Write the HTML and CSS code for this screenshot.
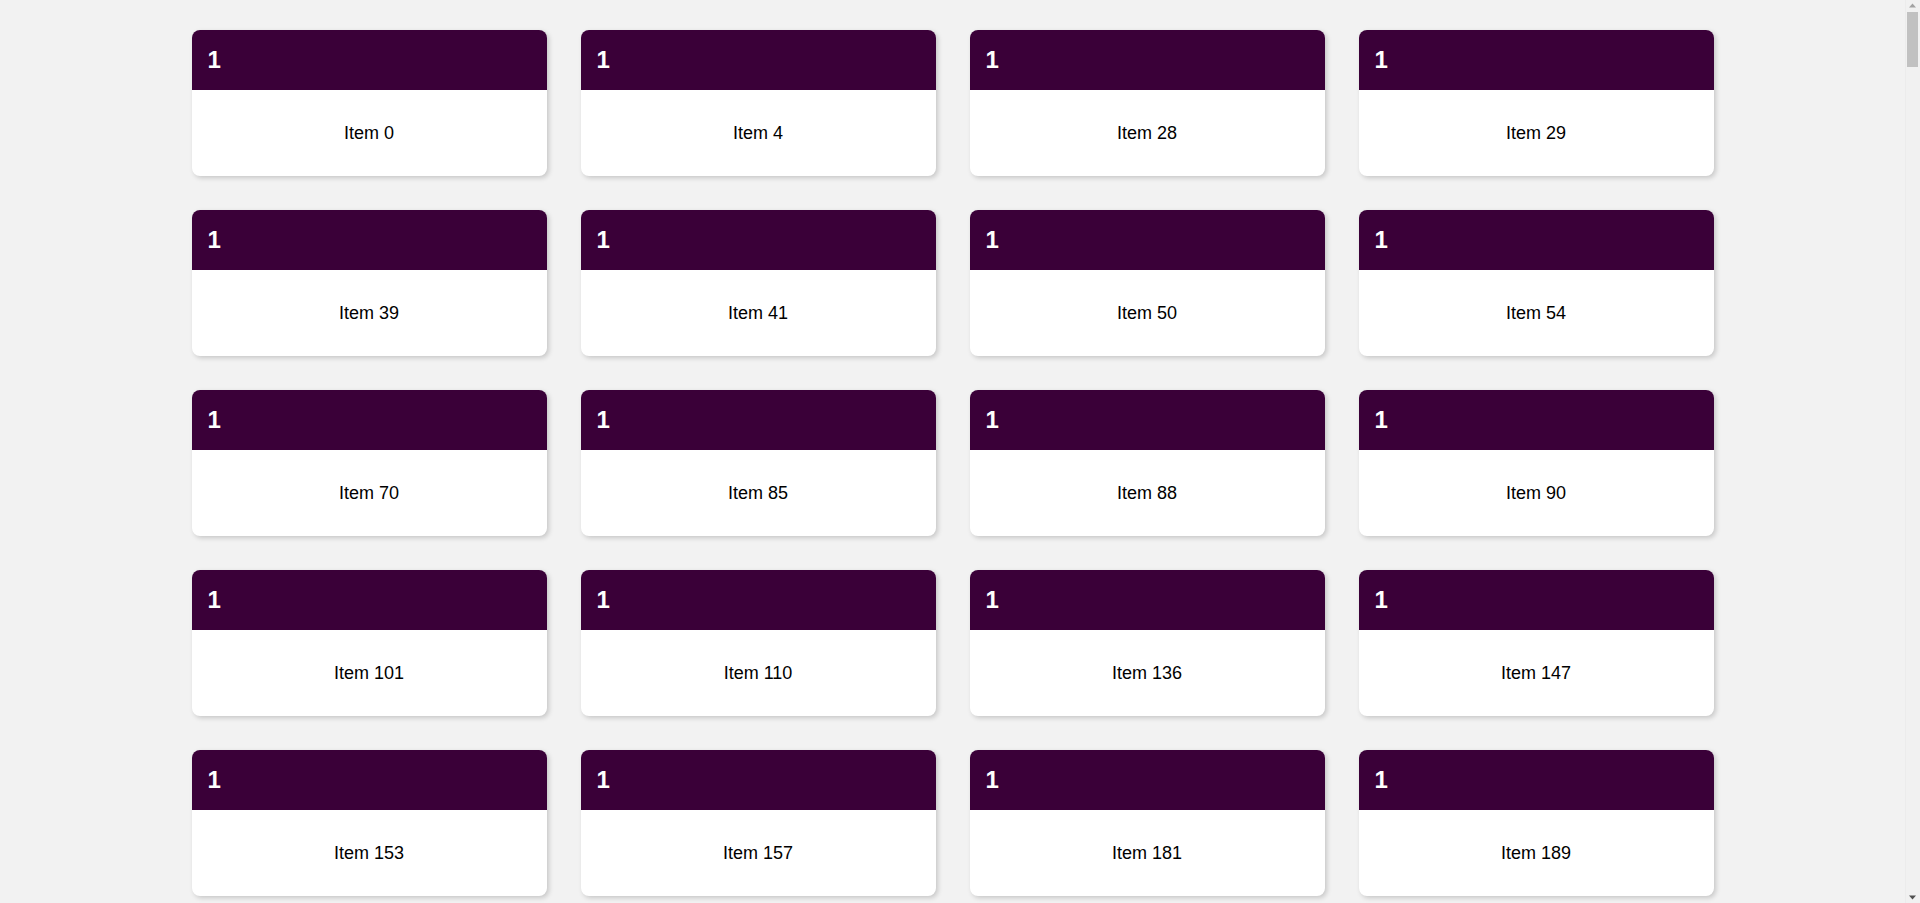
FILE: index.html
```html
<!DOCTYPE html>
<html lang="en">
<head>
<meta charset="utf-8">
<title>Items</title>
<link rel="stylesheet" href="styles.css">
</head>
<body>
<main class="grid">
  <div class="card"><div class="card-head">1</div><div class="card-body">Item 0</div></div>
  <div class="card"><div class="card-head">1</div><div class="card-body">Item 4</div></div>
  <div class="card"><div class="card-head">1</div><div class="card-body">Item 28</div></div>
  <div class="card"><div class="card-head">1</div><div class="card-body">Item 29</div></div>
  <div class="card"><div class="card-head">1</div><div class="card-body">Item 39</div></div>
  <div class="card"><div class="card-head">1</div><div class="card-body">Item 41</div></div>
  <div class="card"><div class="card-head">1</div><div class="card-body">Item 50</div></div>
  <div class="card"><div class="card-head">1</div><div class="card-body">Item 54</div></div>
  <div class="card"><div class="card-head">1</div><div class="card-body">Item 70</div></div>
  <div class="card"><div class="card-head">1</div><div class="card-body">Item 85</div></div>
  <div class="card"><div class="card-head">1</div><div class="card-body">Item 88</div></div>
  <div class="card"><div class="card-head">1</div><div class="card-body">Item 90</div></div>
  <div class="card"><div class="card-head">1</div><div class="card-body">Item 101</div></div>
  <div class="card"><div class="card-head">1</div><div class="card-body">Item 110</div></div>
  <div class="card"><div class="card-head">1</div><div class="card-body">Item 136</div></div>
  <div class="card"><div class="card-head">1</div><div class="card-body">Item 147</div></div>
  <div class="card"><div class="card-head">1</div><div class="card-body">Item 153</div></div>
  <div class="card"><div class="card-head">1</div><div class="card-body">Item 157</div></div>
  <div class="card"><div class="card-head">1</div><div class="card-body">Item 181</div></div>
  <div class="card"><div class="card-head">1</div><div class="card-body">Item 189</div></div>
</main>
<div class="scrollbar" aria-hidden="true">
  <svg class="sb-arrow sb-up" width="15" height="15" viewBox="0 0 15 15"><polygon points="4,7.5 11,7.5 7.5,3.5" fill="#a3a3a3"/></svg>
  <div class="sb-thumb"></div>
  <svg class="sb-arrow sb-down" width="15" height="15" viewBox="0 0 15 15"><polygon points="4,7.5 11,7.5 7.5,11.5" fill="#505050"/></svg>
</div>
</body>
</html>
```

FILE: styles.css
```css
html, body {
  margin: 0;
  padding: 0;
}

body {
  background: #f2f2f2;
  font-family: "Liberation Sans", Arial, sans-serif;
  color: #000;
}

.grid {
  display: grid;
  grid-template-columns: repeat(4, 355px);
  justify-content: center;
  column-gap: 34px;
  row-gap: 34px;
  padding: 30px 15px 34px 0;
}

.card {
  height: 146px;
  background: #fff;
  border-radius: 8px;
  overflow: hidden;
  box-shadow: 2px 2px 5px rgba(0, 0, 0, 0.18);
  display: flex;
  flex-direction: column;
}

.card-head {
  height: 60px;
  flex: 0 0 60px;
  background: #3a0038;
  color: #fff;
  font-weight: bold;
  font-size: 24px;
  line-height: 60px;
  padding-left: 16px;
}

.card-body {
  flex: 1;
  display: flex;
  align-items: center;
  justify-content: center;
  font-size: 18px;
}

.scrollbar {
  position: fixed;
  top: 0;
  right: 0;
  width: 15px;
  height: 100vh;
  background: #f1f1f1;
  box-shadow: inset 1px 0 0 #ececec;
}

.sb-arrow {
  position: absolute;
  left: 0;
  display: block;
}

.sb-up {
  top: 0;
}

.sb-down {
  bottom: 0;
}

.sb-thumb {
  position: absolute;
  top: 12px;
  left: 2px;
  width: 11px;
  height: 55px;
  background: #c1c1c1;
}
```
